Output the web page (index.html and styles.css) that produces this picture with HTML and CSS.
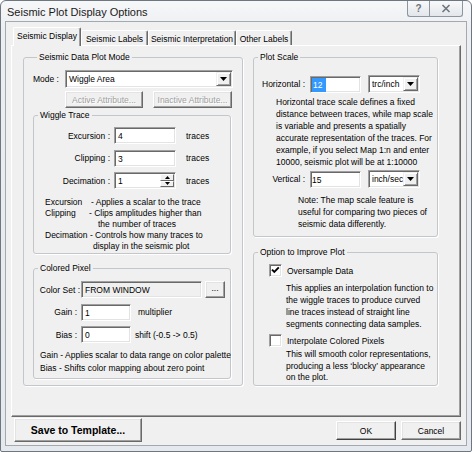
FILE: index.html
```html
<!DOCTYPE html>
<html>
<head>
<meta charset="utf-8">
<title>Seismic Plot Display Options</title>
<link rel="stylesheet" href="styles.css">
</head>
<body>
<div class="window">
  <div class="titlebar">
    <div class="title">Seismic Plot Display Options</div>
    <div class="caption">
      <div class="cap-btn help">?</div>
      <div class="cap-btn close">
        <svg width="10" height="9" viewBox="0 0 10 9"><path d="M1.5 1 L8.5 8 M8.5 1 L1.5 8" stroke="#6f767e" stroke-width="1.6" fill="none"/></svg>
      </div>
    </div>
  </div>
  <div class="client">
    <div class="tabs">
      <div class="tab active">Seismic Display</div>
      <div class="tab t-labels">Seismic Labels</div>
      <div class="tab t-interp">Seismic Interpretation</div>
      <div class="tab t-other">Other Labels</div>
    </div>
    <div class="panel">
      <fieldset class="gb plotmode">
        <legend>Seismic Data Plot Mode</legend>
        <div class="mode-row">
          <span>Mode :</span>
          <div class="select mode-select">
            <span class="sel-text">Wiggle Area</span>
            <span class="drop"><svg width="7" height="4" viewBox="0 0 7 4"><path d="M0 0 H7 L3.5 4 Z" fill="#000"/></svg></span>
          </div>
        </div>
        <div class="attr-row">
          <div class="btn disabled attr-a">Active Attribute...</div>
          <div class="btn disabled attr-b">Inactive Attribute...</div>
        </div>
        <fieldset class="gb wiggle">
          <legend>Wiggle Trace</legend>
          <div class="frow first">
            <span class="flabel">Excursion :</span>
            <div class="edit w-wig">4</div>
            <span class="unit">traces</span>
          </div>
          <div class="frow">
            <span class="flabel">Clipping :</span>
            <div class="edit w-wig">3</div>
            <span class="unit">traces</span>
          </div>
          <div class="frow">
            <span class="flabel">Decimation :</span>
            <div class="edit w-wig spin">
              <span class="spin-text">1</span>
              <span class="spin-btns">
                <span class="sbtn"><svg width="5" height="3" viewBox="0 0 5 3"><path d="M0 3 H5 L2.5 0 Z" fill="#000"/></svg></span>
                <span class="sbtn"><svg width="5" height="3" viewBox="0 0 5 3"><path d="M0 0 H5 L2.5 3 Z" fill="#000"/></svg></span>
              </span>
            </div>
            <span class="unit">traces</span>
          </div>
          <div class="desc">
            <div><span class="dk dk-exc">Excursion</span>- Applies a scalar to the trace</div>
            <div><span class="dk dk-clip">Clipping</span>- Clips amplitudes higher than</div>
            <div class="ind-num">the number of traces</div>
            <div>Decimation - Controls how many traces to</div>
            <div class="ind-disp">display in the seismic plot</div>
          </div>
        </fieldset>
        <fieldset class="gb colored">
          <legend>Colored Pixel</legend>
          <div class="crow first">
            <span class="clabel cs">Color Set :</span>
            <div class="edit readonly w-cs">FROM WINDOW</div>
            <div class="btn dots">...</div>
          </div>
          <div class="crow">
            <span class="clabel">Gain :</span>
            <div class="edit w-gain">1</div>
            <span class="unit u-mult">multiplier</span>
          </div>
          <div class="crow">
            <span class="clabel">Bias :</span>
            <div class="edit w-gain">0</div>
            <span class="unit u-shift">shift (-0.5 -&gt; 0.5)</span>
          </div>
          <div class="cdesc">
            <div>Gain - Applies scalar to data range on color palette</div>
            <div>Bias - Shifts color mapping about zero point</div>
          </div>
        </fieldset>
      </fieldset>

      <div class="rightcol">
        <fieldset class="gb plotscale">
          <legend>Plot Scale</legend>
          <div class="srow first">
            <span class="slabel">Horizontal :</span>
            <div class="edit w-scale"><span class="selected">12</span></div>
            <div class="select unit-select">
              <span class="sel-text">trc/inch</span>
              <span class="drop"><svg width="7" height="4" viewBox="0 0 7 4"><path d="M0 0 H7 L3.5 4 Z" fill="#000"/></svg></span>
            </div>
          </div>
          <div class="para p-hor">
            Horizontal trace scale defines a fixed<br>
            distance between traces, while map scale<br>
            is variable and presents a spatially<br>
            accurate representation of the traces. For<br>
            example, if you select Map 1:n and enter<br>
            10000, seismic plot will be at 1:10000
          </div>
          <div class="srow">
            <span class="slabel">Vertical :</span>
            <div class="edit w-scale">15</div>
            <div class="select unit-select">
              <span class="sel-text">inch/sec</span>
              <span class="drop"><svg width="7" height="4" viewBox="0 0 7 4"><path d="M0 0 H7 L3.5 4 Z" fill="#000"/></svg></span>
            </div>
          </div>
          <div class="para p-note">
            Note: The map scale feature is<br>
            useful for comparing two pieces of<br>
            seismic data differently.
          </div>
        </fieldset>
        <fieldset class="gb improve">
          <legend>Option to Improve Plot</legend>
          <div class="chk-row first">
            <span class="chk"><svg width="9" height="9" viewBox="0 0 9 9"><path d="M1 3.6 L3.3 5.9 L7.8 1.4" stroke="#000" stroke-width="1.9" fill="none"/></svg></span>
            <span>Oversample Data</span>
          </div>
          <div class="para p-chk">
            This applies an interpolation function to<br>
            the wiggle traces to produce curved<br>
            line traces instead of straight line<br>
            segments connecting data samples.
          </div>
          <div class="chk-row second">
            <span class="chk"></span>
            <span>Interpolate Colored Pixels</span>
          </div>
          <div class="para p-chk2">
            This will smooth color representations,<br>
            producing a less ‘blocky’ appearance<br>
            on the plot.
          </div>
        </fieldset>
      </div>
    </div>
    <div class="footer">
      <div class="btn save">Save to Template...</div>
      <div class="btn ok">OK</div>
      <div class="btn cancel">Cancel</div>
    </div>
  </div>
</div>
</body>
</html>
```

FILE: styles.css
```css
* { box-sizing: border-box; }
html, body { margin: 0; padding: 0; }
body {
  width: 472px; height: 452px; overflow: hidden; background: #fff;
  font-family: "Liberation Sans", Arial, sans-serif; font-size: 8.5px; color: #000;
}
.window {
  width: 472px; height: 452px; display: flex; flex-direction: column;
  border: 1px solid #6e7680; border-radius: 6px 6px 2px 2px;
  background: linear-gradient(to bottom, #f6f7f9 0, #eceef1 30px, #e5e8ec 100%);
}
.titlebar { height: 20px; flex: none; display: flex; justify-content: space-between; }
.title { font-size: 11px; line-height: 13px; padding: 5px 0 0 6px; color: #1a1a1a; }
.caption { display: flex; margin-right: 8px; }
.cap-btn {
  height: 16px; border: 1px solid #8d959e; border-top: none;
  background: linear-gradient(#f8f9fa, #e2e6eb);
  display: flex; align-items: center; justify-content: center;
}
.help { width: 22px; border-right: none; border-radius: 0 0 0 3px; color: #6d737b; font-size: 10px; font-weight: bold; }
.close { width: 34px; border-radius: 0 0 3px 0; }

.client {
  flex: 1; margin: 0 4px 5px 4px; border: 1px solid #a3a9b0; background: #f0f0f0;
  display: flex; flex-direction: column;
}
.tabs { display: flex; align-items: flex-end; height: 18px; margin: 5px 0 0 7px; position: relative; z-index: 1; flex: none; }
.tab {
  height: 15px; background: #f0f0f0; white-space: nowrap;
  border-left: 1px solid #fff; border-top: 1px solid #fff; border-right: 1px solid #696969;
  box-shadow: inset -1px 0 0 #a0a0a0; border-radius: 2px 2px 0 0;
  display: flex; align-items: center; justify-content: center; padding-top: 1px;
}
.tab.active { height: 19px; width: 68px; margin-bottom: -1px; padding-bottom: 3px; padding-top: 0; }
.t-labels { width: 67px; }
.t-interp { width: 88px; }
.t-other { width: 56px; }

.panel {
  height: 372px; margin: 0 5px; flex: none;
  border-left: 1px solid #fff; border-top: 1px solid #fff;
  border-right: 1px solid #696969; border-bottom: 1px solid #696969;
  box-shadow: inset -1px -1px 0 #a0a0a0;
  display: grid; grid-template-columns: 220px 185px; column-gap: 10px; align-items: start;
  padding: 6px 0 0 11px;
}

fieldset.gb {
  margin: 0; padding: 0; min-width: 0; border: 1px solid #c3c7cb; border-radius: 3px;
  box-shadow: 1px 1px 0 #fff;
}
fieldset.gb > legend { margin-left: 4px; padding: 0 2px; line-height: 11px; height: 11px; }

.plotmode { height: 334px; padding: 7px 9px 0 9px !important; }
.mode-row { display: flex; align-items: center; height: 18px; }
.mode-select { width: 168px; margin-left: auto; }
.attr-row { display: flex; gap: 10px; margin-top: 3px; padding-left: 32px; }
.attr-a { width: 78px; height: 17px; }
.attr-b { width: 79px; height: 17px; }

.wiggle { width: 198px; height: 144px; margin-top: 2px !important; padding: 6px 0 0 0 !important; }
.frow { display: flex; align-items: center; height: 17px; margin-top: 5.5px; }
.frow.first { margin-top: 0; }
.flabel { width: 80px; text-align: right; padding-right: 4px; flex: none; }
.w-wig { width: 62px; }
.unit { margin-left: 10px; }
.desc { margin-top: 8px; padding-left: 11px; line-height: 11px; white-space: nowrap; }
.dk { display: inline-block; }
.dk-exc { width: 46px; }
.dk-clip { width: 44px; }
.ind-num { padding-left: 53px; }
.ind-disp { padding-left: 48px; }

.colored { width: 198px; height: 116px; margin-top: 9px !important; padding: 7px 0 0 0 !important; }
.crow { display: flex; align-items: center; height: 17px; margin-top: 5.5px; }
.crow.first { margin-top: 0; }
.clabel { width: 47px; text-align: right; padding-right: 4px; flex: none; }
.clabel.cs { padding-right: 1px; }
.w-cs { width: 121px; }
.dots { width: 20px; height: 17px; margin-left: 3px; padding-bottom: 3px; }
.w-gain { width: 50px; }
.u-mult { margin-left: 7px; }
.u-shift { margin-left: 4px; }
.cdesc { margin-top: 6px; padding-left: 6px; line-height: 13px; white-space: nowrap; }

.rightcol { display: flex; flex-direction: column; gap: 10px; }
.plotscale { height: 185px; padding: 12px 0 0 0 !important; }
.srow { display: flex; align-items: center; height: 18px; }
.slabel { width: 56px; text-align: right; padding-right: 5px; flex: none; }
.w-scale { width: 51px; }
.unit-select { width: 52px; margin-left: 7px; }
.para { line-height: 12px; white-space: nowrap; }
.p-hor { padding-left: 22px; margin: 3px 0 2px 0; }
.p-note { padding-left: 44px; margin-top: 6px; }
.selected { display: inline-block; background: #3399ff; color: #fff; padding: 0 4px 0 1px; line-height: 14px; margin-top: 0; }

.improve { height: 139px; padding: 6px 0 0 0 !important; }
.chk-row { display: flex; align-items: center; height: 13px; padding-left: 15px; gap: 5px; }
.chk-row.second { margin-top: 4px; }
.p-chk { padding-left: 32px; margin-top: 5px; }
.p-chk2 { padding-left: 32px; margin-top: 2px; line-height: 11.5px; }
.chk {
  width: 13px; height: 13px; flex: none; background: #fff;
  border: 1px solid; border-color: #a0a0a0 #fff #fff #a0a0a0;
  box-shadow: inset 1px 1px 0 #696969, inset -1px -1px 0 #e3e3e3;
  display: flex; align-items: center; justify-content: center;
}

.edit {
  height: 17px; background: #fff; white-space: nowrap; flex: none;
  border: 1px solid; border-color: #a0a0a0 #fff #fff #a0a0a0;
  box-shadow: inset 1px 1px 0 #696969, inset -1px -1px 0 #e3e3e3;
  padding: 1px 1px 0 3px; line-height: 14px;
}
.edit.readonly { background: #f0f0f0; }
.w-scale { padding-left: 1px; }
.edit.spin { display: flex; padding: 1px; }
.spin-text { flex: 1; padding-left: 2px; }
.spin-btns { width: 14px; display: flex; flex-direction: column; }
.sbtn {
  flex: 1; background: #f0f0f0; display: flex; align-items: center; justify-content: center;
  border: 1px solid; border-color: #fff #696969 #696969 #fff;
}

.select {
  display: flex; height: 18px; background: #fff; padding: 1px;
  border: 1px solid; border-color: #a0a0a0 #fff #fff #a0a0a0;
  box-shadow: inset 1px 1px 0 #696969, inset -1px -1px 0 #e3e3e3;
}
.sel-text { flex: 1; padding-left: 2px; line-height: 14px; white-space: nowrap; overflow: hidden; }
.drop {
  width: 15px; height: 14px; background: #f0f0f0; flex: none;
  border: 1px solid; border-color: #f0f0f0 #696969 #696969 #f0f0f0;
  box-shadow: inset 1px 1px 0 #fff, inset -1px -1px 0 #a0a0a0;
  display: flex; align-items: center; justify-content: center;
}

.btn {
  background: #f0f0f0; white-space: nowrap;
  border: 1px solid; border-color: #fff #696969 #696969 #fff;
  box-shadow: inset -1px -1px 0 #a0a0a0, inset 1px 1px 0 #e3e3e3;
  display: flex; align-items: center; justify-content: center;
}
.btn.disabled { color: #a0a0a0; text-shadow: 1px 1px 0 #fff; }

.footer { flex: 1; display: flex; align-items: flex-start; padding: 0 5px 0 8px; }
.save { width: 128px; height: 24px; margin-top: 1px; font-weight: bold; font-size: 10.5px; }
.ok { width: 60px; height: 19px; margin-left: auto; margin-top: 4px; border-color: #fff #404040 #404040 #fff; }
.cancel { width: 60px; height: 19px; margin-left: 5px; margin-top: 4px; }
```
